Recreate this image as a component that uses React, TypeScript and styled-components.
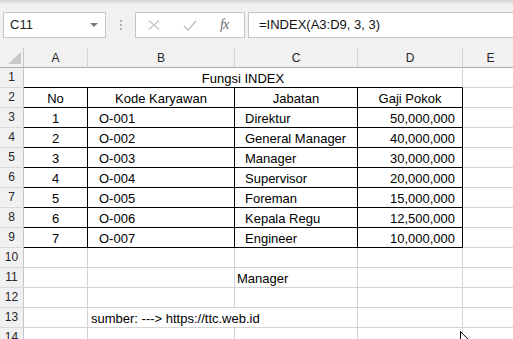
import React from "react";
import styled, { createGlobalStyle } from "styled-components";

const GlobalStyle = createGlobalStyle`
  html, body { margin: 0; padding: 0; background: #ffffff; }
  body { font-family: "Liberation Sans", Arial, sans-serif; }
  * { box-sizing: border-box; }
`;

const Window = styled.div`
  position: relative;
  width: 513px;
  height: 339px;
  overflow: hidden;
  background: #ffffff;
`;

const TopStrip = styled.div`
  height: 4px;
  background: linear-gradient(#d4d4d4, #ececec);
`;

const FormulaBar = styled.div`
  height: 44px;
  background: #f1f1f1;
  display: flex;
  align-items: flex-start;
  padding: 8px 0 0 3px;
`;

const NameBox = styled.div`
  width: 103px;
  height: 26px;
  background: #ffffff;
  border: 1px solid #c6c6c6;
  display: flex;
  align-items: center;
  justify-content: space-between;
  padding: 0 7px 0 6px;
  font-size: 13px;
  line-height: 24px;
  color: #222;
`;

const DropArrow = styled.span`
  width: 0;
  height: 0;
  border-left: 4px solid transparent;
  border-right: 4px solid transparent;
  border-top: 4px solid #7a7a7a;
`;

const Grip = styled.div`
  width: 29px;
  height: 26px;
  display: flex;
  flex-direction: column;
  align-items: center;
  justify-content: center;
  gap: 2px;
`;

const GripDot = styled.span`
  width: 2px;
  height: 2px;
  background: #b0b0b0;
`;

const ButtonsBox = styled.div`
  width: 110px;
  height: 26px;
  background: #ffffff;
  border: 1px solid #c6c6c6;
  display: flex;
  align-items: center;
  padding-left: 12px;
  gap: 23px;
`;

const FxLabel = styled.span`
  font-family: "Liberation Serif", "Times New Roman", serif;
  font-style: italic;
  font-size: 14px;
  color: #6a6a6a;
  letter-spacing: -1px;
`;

const FormulaInput = styled.div`
  flex: 1;
  height: 26px;
  margin-left: 3px;
  background: #ffffff;
  border: 1px solid #c6c6c6;
  border-right: none;
  padding-left: 10px;
  font-size: 13px;
  line-height: 24px;
  color: #111;
`;

const Sheet = styled.div`
  display: grid;
  grid-template-columns: 24px 64px 147px 123px 105px 56px 1fr;
  grid-auto-rows: 20px;
`;

const Corner = styled.div`
  background: #f1f1f1;
  border-right: 1px solid #c6c6c6;
  border-bottom: 1px solid #ababab;
  display: flex;
  align-items: flex-end;
  justify-content: flex-end;
  padding: 0 2px 3px 0;
`;

const ColHeader = styled.div`
  background: #f1f1f1;
  border-right: 1px solid #d4d4d4;
  border-bottom: 1px solid #ababab;
  font-size: 12px;
  line-height: 19px;
  padding-top: 1px;
  text-align: center;
  color: #262626;
`;

const RowHeader = styled.div`
  background: #f1f1f1;
  border-right: 1px solid #c6c6c6;
  border-bottom: 1px solid #d9d9d9;
  font-size: 12px;
  line-height: 19px;
  text-align: center;
  color: #262626;
`;

type Align = "left" | "center" | "right";

const Cell = styled.div<{
  $align?: Align;
  $boxed?: boolean;
  $darkBottom?: boolean;
  $span?: number;
  $indent?: number;
}>`
  grid-column: span ${(p) => p.$span ?? 1};
  border-right: 1px solid ${(p) => (p.$boxed ? "#000000" : "#d4d4d4")};
  border-bottom: 1px solid
    ${(p) => (p.$boxed || p.$darkBottom ? "#000000" : "#d4d4d4")};
  font-size: 13px;
  line-height: 19px;
  padding-top: 1px;
  padding-left: ${(p) => (p.$align === "left" ? p.$indent ?? 2 : 0)}px;
  padding-right: ${(p) => (p.$align === "right" ? 7 : 0)}px;
  text-align: ${(p) => p.$align ?? "left"};
  white-space: nowrap;
  color: #000000;
`;

const Pointer = styled.svg`
  position: absolute;
  left: 460px;
  top: 331px;
`;

const columns = ["A", "B", "C", "D", "E"];

const employees = [
  ["1", "O-001", "Direktur", "50,000,000"],
  ["2", "O-002", "General Manager", "40,000,000"],
  ["3", "O-003", "Manager", "30,000,000"],
  ["4", "O-004", "Supervisor", "20,000,000"],
  ["5", "O-005", "Foreman", "15,000,000"],
  ["6", "O-006", "Kepala Regu", "12,500,000"],
  ["7", "O-007", "Engineer", "10,000,000"],
];

const Filler = () => <Cell />;

export default function App() {
  return (
    <>
      <GlobalStyle />
      <Window>
        <TopStrip />
        <FormulaBar>
          <NameBox>
            <span>C11</span>
            <DropArrow />
          </NameBox>
          <Grip>
            <GripDot />
            <GripDot />
            <GripDot />
          </Grip>
          <ButtonsBox>
            <svg width="12" height="10" viewBox="0 0 12 10">
              <path d="M1 0.5 L11 9.5 M11 0.5 L1 9.5" stroke="#c4c4c4" strokeWidth="1.3" fill="none" />
            </svg>
            <svg width="14" height="11" viewBox="0 0 14 11">
              <path d="M1 6 L5 10 L13 1" stroke="#c4c4c4" strokeWidth="1.6" fill="none" />
            </svg>
            <FxLabel>fx</FxLabel>
          </ButtonsBox>
          <FormulaInput>=INDEX(A3:D9, 3, 3)</FormulaInput>
        </FormulaBar>

        <Sheet>
          <Corner>
            <svg width="13" height="12" viewBox="0 0 13 12">
              <polygon points="13,0 13,12 0,12" fill="#c8c8c8" />
            </svg>
          </Corner>
          {columns.map((c) => (
            <ColHeader key={c}>{c}</ColHeader>
          ))}
          <ColHeader />

          <RowHeader>1</RowHeader>
          <Cell $span={4} $align="center" $darkBottom>
            Fungsi INDEX
          </Cell>
          <Filler />
          <Filler />

          <RowHeader>2</RowHeader>
          <Cell $boxed $align="center">No</Cell>
          <Cell $boxed $align="center">Kode Karyawan</Cell>
          <Cell $boxed $align="center">Jabatan</Cell>
          <Cell $boxed $align="center">Gaji Pokok</Cell>
          <Filler />
          <Filler />

          {employees.map((e, i) => (
            <React.Fragment key={e[1]}>
              <RowHeader>{i + 3}</RowHeader>
              <Cell $boxed $align="center">{e[0]}</Cell>
              <Cell $boxed $align="left" $indent={11}>{e[1]}</Cell>
              <Cell $boxed $align="left" $indent={10}>{e[2]}</Cell>
              <Cell $boxed $align="right">{e[3]}</Cell>
              <Filler />
              <Filler />
            </React.Fragment>
          ))}

          <RowHeader>10</RowHeader>
          <Filler /><Filler /><Filler /><Filler /><Filler /><Filler />

          <RowHeader>11</RowHeader>
          <Filler /><Filler />
          <Cell $align="left" $indent={2}>Manager</Cell>
          <Filler /><Filler /><Filler />

          <RowHeader>12</RowHeader>
          <Filler /><Filler /><Filler /><Filler /><Filler /><Filler />

          <RowHeader>13</RowHeader>
          <Filler />
          <Cell $span={2} $align="left" $indent={3}>sumber: ---&gt; https://ttc.web.id</Cell>
          <Filler /><Filler /><Filler />

          <RowHeader>14</RowHeader>
          <Filler /><Filler /><Filler /><Filler /><Filler /><Filler />
        </Sheet>

        <Pointer width="12" height="19" viewBox="0 0 12 19">
          <path d="M0.5 0.5 L0.5 15 L4 11.5 L6.5 17.5 L8.5 16.7 L6 10.8 L10.5 10.8 Z" fill="#ffffff" stroke="#000000" strokeWidth="1" />
        </Pointer>
      </Window>
    </>
  );
}
